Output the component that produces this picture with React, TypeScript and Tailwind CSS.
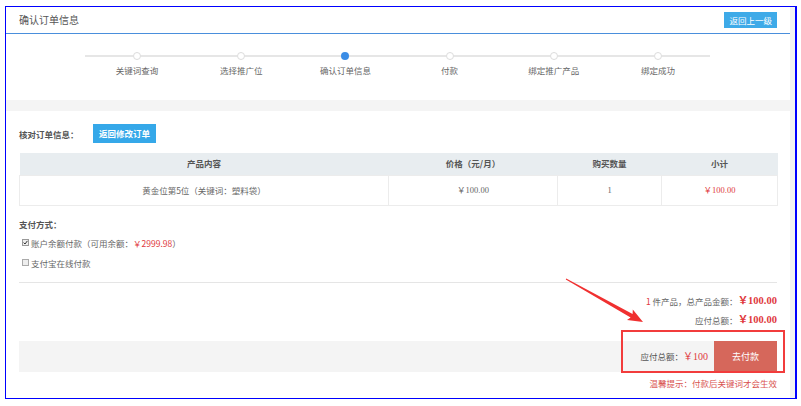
import React from "react";

const steps = ["关键词查询", "选择推广位", "确认订单信息", "付款", "绑定推广产品", "绑定成功"];

export default function App() {
  return (
    <div
      className="relative w-[801px] h-[406px] bg-white overflow-hidden text-[#666]"
      style={{ fontFamily: '"Noto Sans CJK SC", "Noto Sans", sans-serif' }}
    >
      <div className="ml-[5px] mt-[6px] w-[792px] h-[393px] border-t border-b border-l border-r-2 border-[#0000ff] bg-[#f4f4f4] flex flex-col">
        {/* top card */}
        <div className="w-[784px] h-[93px] bg-white flex flex-col">
          <div className="h-[27px] border-b border-[#4a8fdc] flex items-center justify-between pl-[13px] pr-[13px]">
            <span className="text-[10px] leading-[12px] text-[#555]">确认订单信息</span>
            <span className="h-[16px] px-[5px] bg-[#3eaae8] text-white text-[8.5px] leading-[16px]">返回上一级</span>
          </div>
          <div className="ml-[79px] mt-[18px] w-[625px] flex">
            {steps.map((s, i) => (
              <div key={s} className="flex-1 flex flex-col items-center">
                <div className="w-full flex items-center">
                  <div className="flex-1 h-[2px] bg-[#e6e6e6]" />
                  {i === 2 ? (
                    <div className="w-[8px] h-[8px] rounded-full bg-[#3b8de6]" />
                  ) : (
                    <div className="w-[8px] h-[8px] rounded-full border border-[#dcdcdc] bg-white" />
                  )}
                  <div className="flex-1 h-[2px] bg-[#e6e6e6]" />
                </div>
                <span className="mt-[4px] text-[8.5px] leading-[12px] text-[#666]">{s}</span>
              </div>
            ))}
          </div>
        </div>
        {/* bottom card */}
        <div className="mt-[11px] w-[784px] h-[287px] bg-white px-[13px] pt-[13px] flex flex-col">
          <div className="flex items-center h-[19px]">
            <span className="text-[8.5px] leading-[12px] font-bold text-[#555] w-[74px]">核对订单信息：</span>
            <span className="h-[19px] w-[63px] bg-[#35a8e9] text-white text-[8.5px] font-bold leading-[19px] text-center">返回修改订单</span>
          </div>
          <table className="mt-[10px] w-[758px] table-fixed border-collapse text-[8.5px]">
            <colgroup>
              <col className="w-[369px]" />
              <col className="w-[169px]" />
              <col className="w-[104px]" />
              <col className="w-[116px]" />
            </colgroup>
            <thead>
              <tr className="h-[22px] bg-[#e8edf0] text-[#555] font-bold">
                <th className="font-bold">产品内容</th>
                <th className="font-bold">价格（元/月）</th>
                <th className="font-bold">购买数量</th>
                <th className="font-bold">小计</th>
              </tr>
            </thead>
            <tbody>
              <tr className="h-[30px] text-center">
                <td className="border border-[#ececec]">黄金位第5位（关键词：塑料袋）</td>
                <td className="border border-[#ececec]" style={{ fontFamily: '"Liberation Serif", "Noto Sans CJK SC", serif' }}>￥100.00</td>
                <td className="border border-[#ececec]" style={{ fontFamily: '"Liberation Serif", serif' }}>1</td>
                <td className="border border-[#ececec] text-[#e0393e]" style={{ fontFamily: '"Liberation Serif", "Noto Sans CJK SC", serif' }}>￥100.00</td>
              </tr>
            </tbody>
          </table>
          <div className="mt-[12px] text-[8.5px] leading-[12px] font-bold text-[#555]">支付方式：</div>
          <div className="mt-[7px] flex items-center h-[12px] text-[8.5px] leading-[12px]">
            <span className="ml-[3px] w-[7px] h-[7px] border border-[#999] bg-[#eee] flex items-center justify-center">
              <svg width="5" height="5" viewBox="0 0 5 5">
                <path d="M0.6 2.6 L2 4 L4.4 0.9" stroke="#333" strokeWidth="1" fill="none" />
              </svg>
            </span>
            <span className="ml-[2px]">账户余额付款（可用余额：<span className="text-[#e0393e]">￥2999.98</span>）</span>
          </div>
          <div className="mt-[8px] flex items-center h-[12px] text-[8.5px] leading-[12px]">
            <span className="ml-[3px] w-[7px] h-[7px] border border-[#aaa] bg-[#eee]" />
            <span className="ml-[2px]">支付宝在线付款</span>
          </div>
          <div className="mt-[13px] h-px bg-[#e5e5e5]" />
          <div className="mt-[12px] flex justify-end items-center h-[12px] text-[8.5px] leading-[12px]">
            <span className="text-[#e0393e]">1</span>
            <span>&nbsp;件产品，总产品金额：</span>
            <span className="text-[#e0393e] font-bold text-[10.5px]" style={{ fontFamily: '"Liberation Serif", "Noto Sans CJK SC", serif' }}>￥100.00</span>
          </div>
          <div className="mt-[7px] flex justify-end items-center h-[12px] text-[8.5px] leading-[12px]">
            <span>应付总额：</span>
            <span className="text-[#e0393e] font-bold text-[10.5px]" style={{ fontFamily: '"Liberation Serif", "Noto Sans CJK SC", serif' }}>￥100.00</span>
          </div>
          <div className="mt-[15px] h-[31px] bg-[#f4f4f4] flex justify-end items-center">
            <span className="text-[8.5px] leading-[12px] text-[#555]">应付总额：</span>
            <span className="text-[#e0393e] text-[10px]" style={{ fontFamily: '"Liberation Serif", "Noto Sans CJK SC", serif' }}>￥100</span>
            <span className="ml-[6px] w-[63px] h-[31px] bg-[#d6675b] text-white text-[9px] leading-[31px] text-center">去付款</span>
          </div>
          <div className="mt-[5px] text-right text-[8.5px] leading-[12px] text-[#d9534f]">温馨提示：付款后关键词才会生效</div>
        </div>
      </div>
      {/* annotation overlays */}
      <div className="absolute left-[621px] top-[330px] w-[164px] h-[43px] border-2 border-[#f23c3c]" />
      <svg className="absolute left-0 top-0 pointer-events-none" width="801" height="406" viewBox="0 0 801 406">
        <polygon
          points="566.2,278.6 632.6,313.9 632.8,309.5 643,322 627,319.9 630.6,317.4 565.8,279.4"
          fill="#f03030"
        />
      </svg>
    </div>
  );
}
